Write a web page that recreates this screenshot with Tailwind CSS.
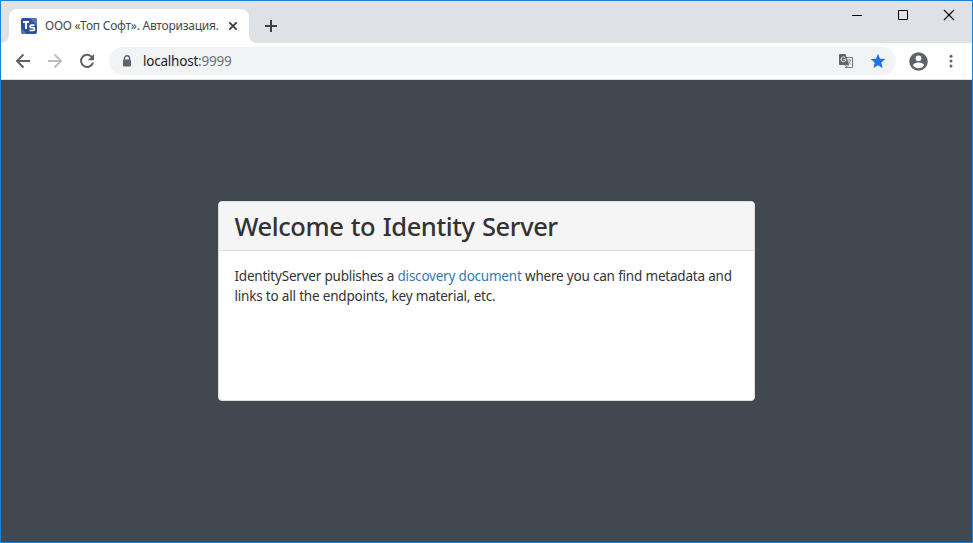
<!DOCTYPE html>
<html lang="en">
<head>
<meta charset="utf-8">
<title>ООО «Топ Софт». Авторизация.</title>
<script src="https://cdn.jsdelivr.net/npm/@tailwindcss/browser@4"></script>
</head>
<body class="overflow-hidden font-['Noto_Sans','Open_Sans',sans-serif]">
<div class="flex h-[543px] w-[973px] flex-col border border-[#1883d7] bg-[#414850]">
  <header class="flex h-[42px] shrink-0 items-end bg-[#dee1e6]">
    <svg class="h-2 w-2 shrink-0" viewBox="0 0 8 8"><path d="M8 0v8H0a8 8 0 0 0 8-8z" fill="#fff"/></svg>
    <div class="flex h-[34px] w-60 shrink-0 items-center rounded-t-lg bg-white pl-3">
      <svg class="h-4 w-4 shrink-0" viewBox="0 0 16 16"><rect width="16" height="16" rx="2" fill="#2c50a0"/><path d="M0 10L6 16H2a2 2 0 0 1-2-2zM9 0h5a2 2 0 0 1 2 2v6z" fill="#5475b8"/><path d="M2 4h6M5 4v7" stroke="#fff" stroke-width="2" fill="none"/><path d="M13.500 7.200H10.500q-1.500 0-1.500 1.200t1.500 1.300h1.500q1.500 0 1.500 1.400T12 12.500H8.500" stroke="#fff" stroke-width="1.700" fill="none"/></svg>
      <span class="ml-2 w-[175px] whitespace-nowrap text-[12px] leading-4 tracking-[-0.25px] text-[#45494d]">ООО «Топ Софт». Авторизация.</span>
      <svg class="ml-2 h-4 w-4 shrink-0" viewBox="0 0 16 16"><path d="M1.300 4.300l7.400 7.400m0-7.400l-7.400 7.400" stroke="#3c4043" stroke-width="1.800"/></svg>
    </div>
    <svg class="h-2 w-2 shrink-0" viewBox="0 0 8 8"><path d="M0 0v8h8a8 8 0 0 1-8-8z" fill="#fff"/></svg>
    <svg class="mb-[11px] ml-[8px] h-3 w-3 shrink-0" viewBox="0 0 12 12"><path d="M6 0v12M0 6h12" stroke="#3c4043" stroke-width="2"/></svg>
    <div class="ml-auto flex self-start">
      <svg class="h-[29px] w-[46px]" viewBox="0 0 46 29"><path d="M18 14.500h10" stroke="#000"/></svg>
      <svg class="h-[29px] w-[46px]" viewBox="0 0 46 29"><path d="M18.500 9.500h9v9h-9z" stroke="#000" fill="none"/></svg>
      <svg class="h-[29px] w-[46px]" viewBox="0 0 46 29"><path d="M18 9l10 10m0-10L18 19" stroke="#000" stroke-width="1.100"/></svg>
    </div>
  </header>
  <nav class="flex h-[37px] shrink-0 items-center border-b border-[#dcdee0] bg-white pl-[14px]">
    <svg class="h-4 w-4 shrink-0" viewBox="0 0 16 16"><path d="M15 8H2m6.500-6.500L2 8l6.500 6.500" stroke="#5f6368" stroke-width="2" fill="none"/></svg>
    <svg class="ml-4 h-4 w-4 shrink-0" viewBox="0 0 16 16"><path d="M1 8h13M7.500 1.500L14 8l-6.500 6.500" stroke="#babcbe" stroke-width="2" fill="none"/></svg>
    <svg class="ml-4 h-4 w-4 shrink-0" viewBox="0 0 16 16"><path d="M13.200 4.500A6.100 6.100 0 1 0 14 9.500" stroke="#5f6368" stroke-width="2" fill="none"/><path d="M15 1v6.200H8.800z" fill="#5f6368"/></svg>
    <div class="ml-[14px] flex h-7 w-[787px] shrink-0 items-center rounded-full bg-[#f1f3f4] pl-[13px]">
      <svg class="h-3 w-[10px] shrink-0" viewBox="0 0 10 12"><path d="M2.500 5V3.200a2.500 2.500 0 0 1 5 0V5" stroke="#5f6368" stroke-width="1.400" fill="none"/><rect x="1" y="4.500" width="8" height="7" rx="1" fill="#5f6368"/></svg>
      <span class="ml-[11px] text-[13.500px] leading-5 tracking-[-0.220px] text-[#202124]">localhost<span class="text-[#6b6f74]">:9999</span></span>
      <svg class="ml-auto h-[14px] w-[14px] shrink-0" viewBox="0 0 14 14"><path d="M7 3.500h6.500v10H6" fill="#fff" stroke="#777a7e"/><path d="M1 0h5.500L10 11H1a1 1 0 0 1-1-1V1a1 1 0 0 1 1-1z" fill="#5f6368"/><path d="M6.300 3.900A2.400 2.400 0 1 0 6.800 5.700H4.500" stroke="#fff" fill="none"/><path d="M8 6h4.500M10.200 5v1M11.700 6q-.500 2.500-2.700 4M8.700 7l3.500 3.800M6 11l2.500 2.500L9.500 11z" stroke="#777a7e" stroke-width=".8" fill="none"/></svg>
      <svg class="ml-[18px] mr-[11px] h-[14px] w-[14px] shrink-0 overflow-visible" viewBox="0 0 14 14"><path d="M7 -.3l2.050 4.950 5.350.45-4.050 3.500 1.250 5.300L7 11.150 2.400 13.900l1.250-5.300-4.050-3.500 5.350-.45z" fill="#1a73e8"/></svg>
    </div>
    <svg class="ml-[12.500px] h-[19px] w-[19px] shrink-0" viewBox="0 0 19 19"><circle cx="9.500" cy="9.500" r="9.300" fill="#5f6368"/><circle cx="9.500" cy="6.300" r="2.900" fill="#fff"/><path d="M3.900 13.300c1-3.700 10.200-3.700 11.200 0a6.800 6.800 0 0 1-11.200 0z" fill="#fff"/></svg>
    <svg class="ml-[21px] h-[14px] w-1 shrink-0" viewBox="0 0 4 14"><g fill="#5f6368"><circle cx="2" cy="2.200" r="1.500"/><circle cx="2" cy="7.100" r="1.500"/><circle cx="2" cy="12" r="1.500"/></g></svg>
  </nav>
  <main class="flex flex-1 justify-center pt-[121px]">
    <section class="h-[200px] w-[537px] overflow-hidden rounded border border-[#dddddd] bg-white text-[#333]">
      <div class="h-[49px] border-b border-[#dddddd] bg-[#f5f5f5] px-[15.500px] pt-[7px]">
        <h1 class="whitespace-nowrap text-[25.500px] font-medium leading-[34px] tracking-[-0.430px] [word-spacing:1.2px]">Welcome to Identity Server</h1>
      </div>
      <div class="whitespace-nowrap px-[15.500px] pt-[15px] text-[13.500px] leading-5 tracking-[-0.220px] [word-spacing:0.150px]">
        <p>IdentityServer publishes a <a class="text-[#337ab7]">discovery document</a> where you can find metadata and<br>links to all the endpoints, key material, etc.</p>
      </div>
    </section>
  </main>
</div>
</body>
</html>
